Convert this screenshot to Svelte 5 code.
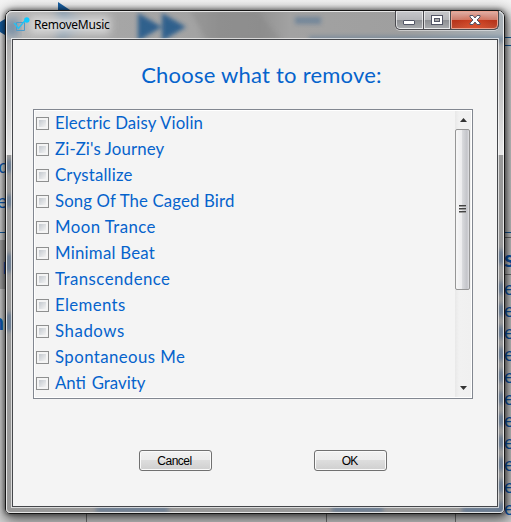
<script>
  const songs = [
    { name: 'Electric Daisy Violin', track: 0.14 },
    { name: "Zi-Zi's Journey", track: 0.14 },
    { name: 'Crystallize', track: 0.18 },
    { name: 'Song Of The Caged Bird', track: 0.13 },
    { name: 'Moon Trance', track: 0.45 },
    { name: 'Minimal Beat', track: 0.25 },
    { name: 'Transcendence', track: 0.46 },
    { name: 'Elements', track: 0.37 },
    { name: 'Shadows', track: 0.57 },
    { name: 'Spontaneous Me', track: 0.43 },
    { name: 'Anti Gravity', track: 0 }
  ];
  const endings = Array.from({ length: 11 }, (_, i) => 277 + i * 22);
</script>

<div class="desktop">
  <svg class="backdrop" width="511" height="522" aria-hidden="true">
    <path d="M58 2L82 18L58 34ZM-8 27L5 19V35Z" fill="#1762a8" />
    <path d="M500 37.5H511M500 45.5H511M0 232.5H8M500 232.5H511" stroke="#1762a8" />
    <path d="M0 240H8V289H0Z" fill="#aaa" />
    <path d="M500 237.5H511M500 274.5H511M86.5 510V522M326.5 510V522M455.5 510V522" stroke="#777" />
  </svg>
  <span class="peek left" style:top="155px" style:right="502px">d</span>
  <span class="peek left" style:top="190px" style:right="504px">e</span>
  <span class="peek left bold" style:top="252px" style:right="500px">r</span>
  <span class="peek left bold" style:top="308px" style:right="507px">n</span>
  <span class="peek right bold" style:top="245px">s</span>
  {#each endings as y}<span class="peek right" style:top="{y}px">e</span>{/each}

  <div class="window">
    <svg class="glass" width="498" height="502" viewBox="6 11 498 502" aria-hidden="true">
      <defs>
        <linearGradient id="bar"><stop offset="0" stop-color="#bababa" /><stop offset=".12" stop-color="#a8a8a8" /><stop offset=".38" stop-color="#a3a3a3" /><stop offset=".43" stop-color="#969696" /><stop offset=".51" stop-color="#939393" /><stop offset=".57" stop-color="#a2a2a2" /><stop offset=".8" stop-color="#9f9f9f" /><stop offset="1" stop-color="#a9b1b7" /></linearGradient>
        <linearGradient id="side" x2="0" y2="1"><stop offset="0" stop-color="#aaa" /><stop offset="1" stop-color="#e6e6e6" /></linearGradient>
        <filter id="soft" x="-30%" y="-50%" width="160%" height="200%"><feGaussianBlur stdDeviation="2.2" /></filter>
        <filter id="haze" x="-30%" y="-50%" width="160%" height="200%"><feGaussianBlur stdDeviation="4" /></filter>
      </defs>
      <path d="M6 11H504V513H6Z" fill="#999" />
      <path d="M6 11H504V40H6Z" fill="url(#bar)" />
      <path d="M6 40H13V155H6ZM498 40H504V155H498Z" fill="url(#side)" />
      <path d="M190 11H257L281 40H207Z" fill="#858585" opacity=".4" filter="url(#soft)" />
      <path d="M138 13L162 27L138 41ZM162 13L186 27L162 41Z" fill="#2c5d8c" opacity=".95" filter="url(#soft)" />
      <path d="M58 8L86 24L58 40Z" fill="#4779a6" opacity=".65" filter="url(#haze)" />
      <path d="M6 20L18 18V36H6Z" fill="#45709a" opacity=".6" filter="url(#haze)" />
      <path d="M30 16H110V34H30Z" fill="#dcdcdc" opacity=".9" filter="url(#haze)" />
      <path d="M295 17H321V24H295Z" fill="#607b97" opacity=".7" filter="url(#soft)" />
      <path d="M309 36H504V43H309Z" fill="#607b97" opacity=".55" filter="url(#soft)" />
      <g fill="#5b7390" filter="url(#soft)" opacity=".85">
        <rect x="6" y="160" width="6" height="12" /><rect x="6" y="195" width="6" height="12" />
        <rect x="6" y="254" width="6" height="18" /><rect x="6" y="313" width="6" height="18" />
        <rect x="498" y="250" width="6" height="14" />
        {#each endings as y}<rect x="498" y={y + 5} width="6" height="12" />{/each}
        <rect x="96" y="507" width="72" height="5" /><rect x="332" y="507" width="51" height="5" /><rect x="462" y="507" width="42" height="6" />
      </g>
    </svg>
    <header>
      <svg class="logo" width="18" height="16" viewBox="0 0 18 16">
        <path d="M3.5 5.5H11.5V13.5H3.5Z" fill="none" stroke="#4f9bc9" />
        <path d="M1 6L3 8L5.5 11.5L12 3.5" fill="none" stroke="#1fc4f6" stroke-width="1.3" />
        <circle cx="13.8" cy="3" r="2.7" fill="#0dcaff" />
      </svg>
      <span class="caption">RemoveMusic</span>
      <div class="controls">
        <button class="min" aria-label="Minimize"><svg width="13" height="7"><rect x=".5" y="1.5" width="11" height="4" rx=".5" fill="#fff" stroke="#535666" /></svg></button>
        <button class="max" aria-label="Maximize"><svg width="12" height="10"><rect x=".5" y=".5" width="11" height="9" fill="#fff" stroke="#535666" /><rect x="3.5" y="3.5" width="5" height="3" fill="#aaa" stroke="#535666" /></svg></button>
        <button class="close" aria-label="Close"><svg width="12" height="11"><path d="M1 .5H4L6 3L8 .5H11V2L8 5L11 8V9.5H8L6 7L4 9.5H1V8L4 5L1 2Z" fill="#fff" stroke="#535666" /></svg></button>
      </div>
    </header>
    <main>
      <h1>Choose what to remove:</h1>
      <div class="listbox">
        <ul>
          {#each songs as song}<li><i class="check"></i><span style:letter-spacing="{song.track}px">{song.name}</span></li>{/each}
        </ul>
        <div class="scroll">
          <div class="arrow"><svg width="7" height="4"><path d="M3.5 0L7 4H0Z" fill="#333" /></svg></div>
          <div class="thumb"><i></i><i></i><i></i></div>
          <div class="track"></div>
          <div class="arrow"><svg width="7" height="4"><path d="M0 0H7L3.5 4Z" fill="#333" /></svg></div>
        </div>
      </div>
      <div class="actions"><button>Cancel</button><button>OK</button></div>
    </main>
  </div>
</div>

<style>
  :global(body) { margin: 0; overflow: hidden; }
  * { box-sizing: border-box; }
  .desktop { position: relative; width: 511px; height: 522px; overflow: hidden; background: linear-gradient(#f4f4f4, #efefef 35px, #d9d9d9 240px, #d6d6d6); font-family: "Liberation Sans", sans-serif; }
  .backdrop { position: absolute; inset: 0; }
  .peek { position: absolute; font: 19px/22px Lato, sans-serif; color: #0c5fc0; }
  .right { left: 504px; }
  .bold { font-size: 23px; line-height: 26px; font-weight: bold; }
  .window { position: absolute; left: 5px; top: 10px; width: 500px; height: 504px; border: 1px solid #151515; border-radius: 7px 7px 5px 5px; box-shadow: 0 0 4px 1px rgba(0,0,0,.45), 2px 4px 14px 3px rgba(0,0,0,.55); }
  .glass { position: absolute; inset: 0; border-radius: 6px 6px 4px 4px; }
  .window::after { content: ""; position: absolute; inset: 0; border: 1px solid rgba(255,255,255,.75); border-radius: 6px 6px 4px 4px; pointer-events: none; }
  header { position: relative; display: flex; height: 28px; padding-left: 7px; }
  .logo { margin-top: 6px; }
  .caption { margin: 5px 0 0 3px; font: 12px/17px "Noto Sans", sans-serif; letter-spacing: -.25px; color: #000; white-space: nowrap; }
  .controls { position: relative; z-index: 1; display: flex; height: 19px; margin: 0 5px 0 auto; border: 1px solid #4b4b50; border-top: 0; border-radius: 0 0 5px 5px; overflow: hidden; background: #4b4b50; box-shadow: 0 1px 0 rgba(255,255,255,.45); }
  .controls button { display: flex; align-items: center; justify-content: center; padding: 0; border: 1px solid rgba(255,255,255,.65); background: linear-gradient(#c5c6c9, #b5b6b9 49%, #8c8e92 50%, #a7a9ac); }
  .controls .min { width: 27px; margin-right: 1px; border-radius: 0 0 0 4px; }
  .min svg { margin-top: 5px; }
  .controls .max { width: 26px; margin-right: 1px; }
  .controls .close { width: 47px; border-color: #e9a28f; border-radius: 0 0 4px 0; background: radial-gradient(ellipse at 50% 100%, rgba(240,90,50,.6), transparent 65%), linear-gradient(#e0aba0, #cd7c6b 48%, #b83218 50%, #bd4a30); }
  main { position: relative; display: flex; flex-direction: column; width: 486px; height: 468px; margin-left: 6px; border: 1px solid #45474b; background: #f4f4f4; box-shadow: 0 0 0 1px rgba(255,255,255,.65); }
  h1 { margin: 20px 0 0; padding-left: 13px; text-align: center; font: 22px/30px Lato, sans-serif; letter-spacing: .23px; color: #0563cc; white-space: nowrap; }
  .listbox { display: flex; width: 440px; height: 290px; margin: 19px 0 0 20px; border: 1px solid #828790; box-shadow: inset 0 0 0 1px #fff; padding: 1px; }
  ul { flex: 1; margin: -1px 0 0; padding: 0 0 0 1px; list-style: none; }
  li { display: flex; align-items: center; height: 26px; color: #0563cc; font: 16.8px/26px Lato, sans-serif; white-space: nowrap; }
  li span { margin-left: 6px; }
  li:last-child span { word-spacing: 1.5px; }
  .check { width: 13px; height: 13px; border: 1px solid #8e8f8f; background: linear-gradient(135deg, #c3c8ce, #f3f3f3) 2px 2px / 7px 7px no-repeat, #f4f4f4; box-shadow: inset 0 0 0 1px #f4f4f4; }
  .scroll { display: flex; flex-direction: column; width: 17px; margin-right: -1px; border-right: 1px solid #fff; background: linear-gradient(90deg, #e8e8e8, #f1f1f1 4px, #f0f0f0); }
  .arrow { display: flex; align-items: center; justify-content: center; height: 18px; }
  .thumb { display: flex; flex-direction: column; align-items: center; justify-content: center; gap: 1px; width: 15px; height: 161px; margin-bottom: 0; border: 1px solid #969696; border-radius: 2px; background: linear-gradient(90deg, #f7f7f7, #ececee 45%, #d8d9dc 50%, #c3c4c9 85%, #e2e2e5); }
  .thumb i { width: 7px; height: 2px; border-top: 1px solid #444; background: #999; }
  .thumb i:first-child { margin-top: -2px; }
  .track { flex: 1; }
  .actions { display: flex; gap: 102px; margin: 51px 0 0 126px; }
  .actions button { width: 73px; height: 21px; padding: 0 2px 0 0; border: 1px solid #707070; border-radius: 3px; background: linear-gradient(#f2f2f2, #ebebeb 49%, #dddddd 50%, #cfcfcf); box-shadow: inset 0 0 0 1px #fafafa; font: 12px/20px "Liberation Sans", sans-serif; letter-spacing: -.5px; color: #000; }
  .actions button:last-child { letter-spacing: -.8px; }
</style>
